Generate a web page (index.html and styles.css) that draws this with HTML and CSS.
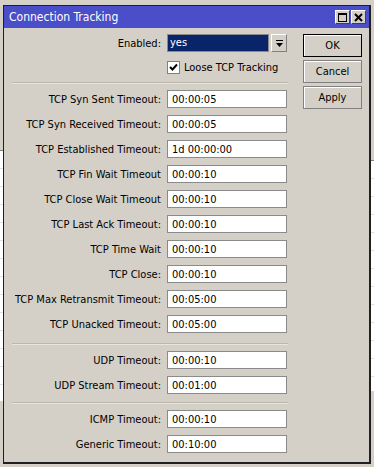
FILE: index.html
```html
<!DOCTYPE html>
<html lang="en">
<head>
    <meta charset="UTF-8">
    <title>Connection Tracking</title>
    <link rel="stylesheet" href="styles.css">
</head>
<body>

    <!-- окно позади -->
    <div class="back-window">
        <div class="back-list back-list-left"></div>
        <div class="back-list back-list-right"></div>
    </div>

    <div class="dialog">
        <div class="title-bar">
            <span class="title-text">Connection Tracking</span>
            <div class="title-buttons">
                <button class="title-btn">
                    <svg width="9" height="9" viewBox="0 0 9 9"><rect x="0.5" y="0.5" width="8" height="8" fill="none" stroke="#000" stroke-width="1"/><rect x="0" y="0" width="9" height="2" fill="#000"/></svg>
                </button>
                <button class="title-btn">
                    <svg width="9" height="9" viewBox="0 0 9 9"><path d="M1 1 L8 8 M8 1 L1 8" stroke="#000" stroke-width="2"/></svg>
                </button>
            </div>
        </div>

        <div class="dialog-body">
            <div class="form">
                <div class="row">
                    <label>Enabled:</label>
                    <div class="select">
                        <span class="select-value">yes</span>
                        <span class="select-btn">
                            <svg width="9" height="9" viewBox="0 0 9 9"><rect x="1" y="1" width="7" height="1" fill="#000"/><path d="M1 4 L8 4 L4.5 8 Z" fill="#000"/></svg>
                        </span>
                    </div>
                </div>
                <div class="row check-row">
                    <span></span>
                    <div class="check">
                        <span class="check-box">
                            <svg width="9" height="9" viewBox="0 0 9 9"><path d="M1 4 L3.5 6.5 L8 1.5" fill="none" stroke="#000" stroke-width="2"/></svg>
                        </span>
                        <span>Loose TCP Tracking</span>
                    </div>
                </div>

                <div class="separator"></div>

                <div class="group" id="tcpGroup"></div>

                <div class="separator sep-udp"></div>

                <div class="group" id="udpGroup"></div>

                <div class="separator sep-icmp"></div>

                <div class="group" id="otherGroup"></div>
            </div>

            <div class="buttons">
                <button class="btn btn-default">OK</button>
                <button class="btn">Cancel</button>
                <button class="btn">Apply</button>
            </div>
        </div>
    </div>

    <script>
        const tcpFields = [
            ['TCP Syn Sent Timeout:', '00:00:05'],
            ['TCP Syn Received Timeout:', '00:00:05'],
            ['TCP Established Timeout:', '1d 00:00:00'],
            ['TCP Fin Wait Timeout', '00:00:10'],
            ['TCP Close Wait Timeout', '00:00:10'],
            ['TCP Last Ack Timeout:', '00:00:10'],
            ['TCP Time Wait', '00:00:10'],
            ['TCP Close:', '00:00:10'],
            ['TCP Max Retransmit Timeout:', '00:05:00'],
            ['TCP Unacked Timeout:', '00:05:00']
        ];
        const udpFields = [
            ['UDP Timeout:', '00:00:10'],
            ['UDP Stream Timeout:', '00:01:00']
        ];
        const otherFields = [
            ['ICMP Timeout:', '00:00:10'],
            ['Generic Timeout:', '00:10:00']
        ];

        // Заполнение группы полей
        function fillGroup(id, fields) {
            const group = document.getElementById(id);
            fields.forEach(([name, value]) => {
                const row = document.createElement('div');
                row.classList.add('row');
                row.innerHTML = `<label>${name}</label><input type="text" value="${value}">`;
                group.appendChild(row);
            });
        }

        fillGroup('tcpGroup', tcpFields);
        fillGroup('udpGroup', udpFields);
        fillGroup('otherGroup', otherFields);
    </script>

</body>
</html>
```

FILE: styles.css
```css
/* Общие стили */
body {
    font-family: 'DejaVu Sans Condensed', 'DejaVu Sans', sans-serif;
    font-size: 11px;
    background: #d4d0c8;
    color: #000;
    margin: 0;
    padding: 0;
    width: 374px;
    height: 467px;
    position: relative;
    overflow: hidden;
}

/* Окно на заднем плане */
.back-window {
    position: absolute;
    left: 0;
    top: 0;
    width: 374px;
    height: 467px;
    background: #d4d0c8;
}

.back-list {
    position: absolute;
    background: #fff;
    border-top: 1px solid #808080;
    background-image: repeating-linear-gradient(to bottom, transparent 0, transparent 17px, #e0e0e0 17px, #e0e0e0 18px);
}

.back-list-left {
    left: 0;
    top: 150px;
    width: 10px;
    height: 250px;
}

.back-list-right {
    left: 360px;
    top: 160px;
    width: 20px;
    height: 230px;
}

/* Диалог */
.dialog {
    position: absolute;
    left: 3px;
    top: 5px;
    width: 365px;
    height: 456px;
    background: #d4d0c8;
    border: 1px solid #202020;
    border-right-width: 2px;
    border-bottom-width: 2px;
    display: flex;
    flex-direction: column;
}

.title-bar {
    height: 22px;
    background: #4a4ec8;
    display: flex;
    align-items: center;
    justify-content: space-between;
    padding: 0 3px 0 5px;
}

.title-text {
    color: #fff;
    font-size: 12px;
}

.title-buttons {
    display: flex;
    gap: 1px;
}

.title-btn {
    width: 15px;
    height: 14px;
    padding: 0;
    background: #d4d0c8;
    border: 1px solid;
    border-color: #fff #404040 #404040 #fff;
    display: flex;
    align-items: center;
    justify-content: center;
}

.dialog-body {
    display: flex;
    padding: 6px 0 0 8px;
}

.form {
    width: 276px;
}

.row {
    display: grid;
    grid-template-columns: 149px 120px;
    column-gap: 6px;
    align-items: center;
    height: 18px;
}

.row label {
    text-align: right;
    white-space: nowrap;
}

.row input {
    box-sizing: border-box;
    width: 120px;
    height: 18px;
    border: 1px solid #8a8a8a;
    padding: 0 4px;
    font-family: inherit;
    font-size: 11px;
    background: #fff;
    outline: none;
}

.group {
    display: flex;
    flex-direction: column;
    gap: 7px;
}

/* Выпадающий список */
.select {
    display: flex;
    width: 120px;
    height: 18px;
    gap: 2px;
}

.select-value {
    flex: 1;
    background: #0a246a;
    color: #fff;
    border: 1px solid #8a8a8a;
    padding: 0 2px;
    line-height: 16px;
}

.select-btn {
    width: 16px;
    box-sizing: border-box;
    border: 1px solid;
    border-color: #fff #808080 #808080 #fff;
    display: flex;
    align-items: center;
    justify-content: center;
}

/* Галочка */
.check-row {
    margin-top: 7px;
    height: 16px;
}

.check {
    display: flex;
    align-items: center;
    gap: 4px;
    white-space: nowrap;
}

.check-box {
    width: 11px;
    height: 11px;
    background: #fff;
    border: 1px solid #808080;
    display: flex;
    align-items: center;
    justify-content: center;
}

.separator {
    height: 0;
    border-top: 1px solid #bcb8b0;
    border-bottom: 1px solid #e8e5df;
    margin: 7px 0 6px 0;
}

.sep-udp {
    margin-top: 10px;
}

.sep-icmp {
    margin-top: 8px;
}

/* Кнопки */
.buttons {
    display: flex;
    flex-direction: column;
    gap: 3px;
    margin-left: 15px;
}

.btn {
    width: 59px;
    height: 23px;
    padding: 0;
    background: #d4d0c8;
    border: 1px solid #808080;
    box-shadow: inset 1px 1px 0 #fff;
    font-family: inherit;
    font-size: 11px;
    color: #000;
    cursor: pointer;
}

.btn-default {
    border: 1px solid #000;
}
```
